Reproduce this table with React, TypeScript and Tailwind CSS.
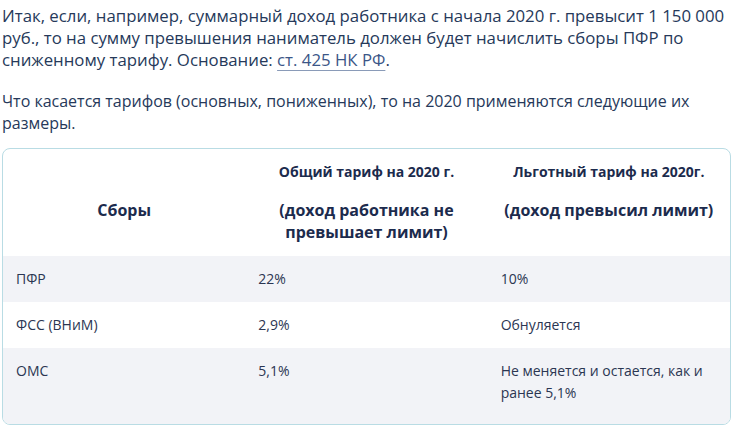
const rows = [
  { name: 'ПФР', common: '22%', reduced: '10%', gray: true },
  { name: 'ФСС (ВНиМ)', common: '2,9%', reduced: 'Обнуляется', gray: false },
  { name: 'ОМС', common: '5,1%', reduced: 'Не меняется и остается, как и ранее 5,1%', gray: true },
];

export default function App() {
  return (
    <div
      className="min-h-screen bg-white pl-[2px] pt-[5px] text-[#26395a]"
      style={{ fontFamily: '"Open Sans", "Noto Sans", sans-serif' }}
    >
      <div className="w-[730px]">
        {/* Текст статьи */}
        <p className="text-[16.8px] leading-[22px]">
          Итак, если, например, суммарный доход работника с начала 2020 г. превысит 1 150 000
          <br />
          руб., то на сумму превышения наниматель должен будет начислить сборы ПФР по
          <br />
          сниженному тарифу. Основание:{' '}
          <a href="#" className="text-[#3b5687] underline decoration-[#8a9bb8] underline-offset-[4px]">
            ст. 425 НК РФ
          </a>
          .
        </p>
        <p className="mt-[19px] text-[16px] leading-[22px]">
          Что касается тарифов (основных, пониженных), то на 2020 применяются следующие их
          <br />
          размеры.
        </p>

        {/* Таблица тарифов */}
        <div className="mt-[14px] w-[729px] overflow-hidden rounded-[8px] border border-[#b9dce4]">
          <div className="grid grid-cols-3 text-center font-bold text-[#1c2b4d]">
            <div className="px-[13px] pb-[13px] pt-[50px] text-[16px] leading-[22px]">Сборы</div>
            <div className="px-[13px] pb-[13px] pt-[12px]">
              <p className="text-[14px] leading-[22px]">Общий тариф на 2020 г.</p>
              <p className="mt-[16px] text-[16px] leading-[22px]">(доход работника не превышает лимит)</p>
            </div>
            <div className="px-[13px] pb-[13px] pt-[12px]">
              <p className="text-[14px] leading-[22px]">Льготный тариф на 2020г.</p>
              <p className="mt-[16px] text-[16px] leading-[22px]">(доход превысил лимит)</p>
            </div>
          </div>
          {rows.map((r, i) => (
            <div
              key={r.name}
              className={`grid grid-cols-3 text-[14px] leading-[22px] text-[#2b3652] ${
                r.gray ? 'bg-[#f2f3f7]' : 'bg-white'
              } ${i === rows.length - 1 ? 'pb-[20px] pt-[12px]' : 'py-[12px]'}`}
            >
              <div className="px-[13px]">{r.name}</div>
              <div className="px-[13px]">{r.common}</div>
              <div className="px-[13px]">{r.reduced}</div>
            </div>
          ))}
        </div>
      </div>
    </div>
  );
}
